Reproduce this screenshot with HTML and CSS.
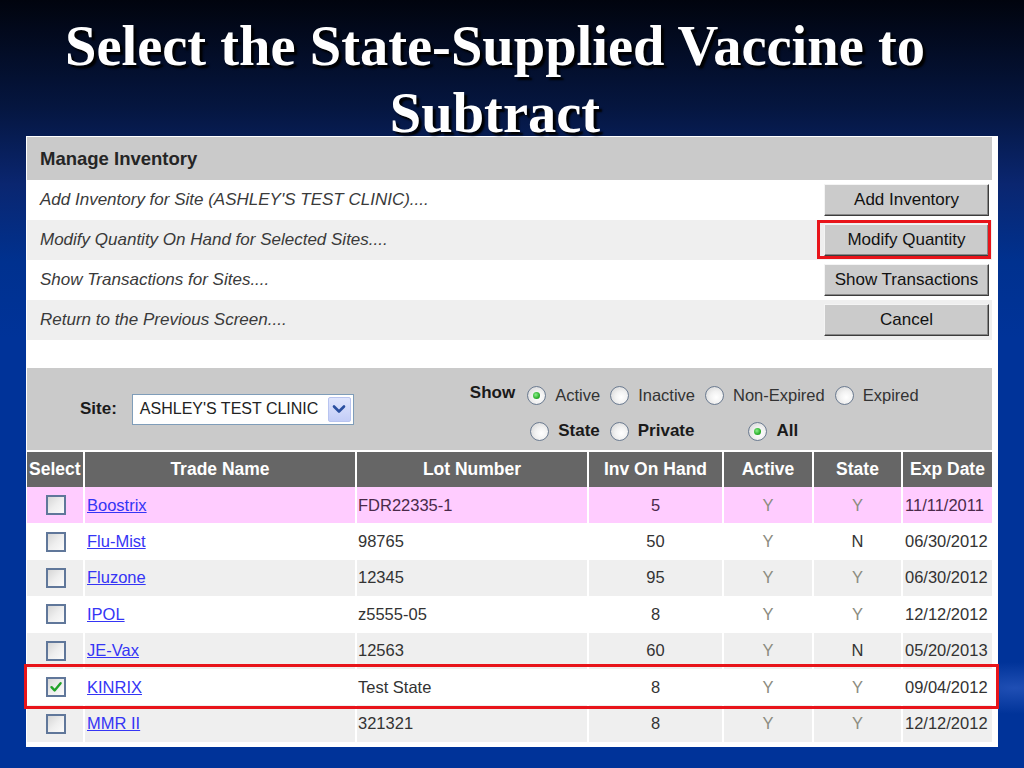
FILE: index.html
```html
<!DOCTYPE html>
<html lang="en">
<head>
<meta charset="utf-8">
<title>Select the State-Supplied Vaccine to Subtract</title>
<link rel="stylesheet" href="styles.css">
</head>
<body>
<div class="slide">
  <h1 class="title">Select the State-Supplied Vaccine to<br>Subtract</h1>

  <div class="panel">
    <div class="mi-head">Manage Inventory</div>
    <div class="mi-row">
      <span class="mi-text">Add Inventory for Site (ASHLEY'S TEST CLINIC)....</span>
      <button class="btn">Add Inventory</button>
    </div>
    <div class="mi-row alt">
      <span class="mi-text">Modify Quantity On Hand for Selected Sites....</span>
      <button class="btn hl">Modify Quantity</button>
    </div>
    <div class="mi-row">
      <span class="mi-text">Show Transactions for Sites....</span>
      <button class="btn">Show Transactions</button>
    </div>
    <div class="mi-row alt">
      <span class="mi-text">Return to the Previous Screen....</span>
      <button class="btn">Cancel</button>
    </div>

    <div class="filter">
      <div class="site">
        <span class="site-label">Site:</span>
        <div class="select">
          <span class="select-text">ASHLEY'S TEST CLINIC</span>
          <span class="select-btn">
            <svg width="14" height="10" viewBox="0 0 14 10"><path d="M2 2.5 L7 7.5 L12 2.5" fill="none" stroke="#2a4fa0" stroke-width="2.6" stroke-linecap="round" stroke-linejoin="round"/></svg>
          </span>
        </div>
      </div>
      <div class="show">
        <span class="show-label">Show</span>
        <div class="radios">
          <div class="radio-row">
            <span class="radio on"></span><span class="rlabel">Active</span>
            <span class="radio"></span><span class="rlabel">Inactive</span>
            <span class="radio"></span><span class="rlabel">Non-Expired</span>
            <span class="radio"></span><span class="rlabel">Expired</span>
          </div>
          <div class="radio-row bold">
            <span class="radio"></span><span class="rlabel">State</span>
            <span class="radio"></span><span class="rlabel">Private</span>
            <span class="radio on far"></span><span class="rlabel">All</span>
          </div>
        </div>
      </div>
    </div>

    <div class="grid">
      <div class="tr th">
        <div class="c sel">Select</div>
        <div class="c">Trade Name</div>
        <div class="c">Lot Number</div>
        <div class="c">Inv On Hand</div>
        <div class="c">Active</div>
        <div class="c">State</div>
        <div class="c">Exp Date</div>
      </div>
      <div class="tr pink">
        <div class="c sel"><span class="cb"></span></div>
        <div class="c name"><a href="#">Boostrix</a></div>
        <div class="c lot">FDR22335-1</div>
        <div class="c mid">5</div>
        <div class="c mid y">Y</div>
        <div class="c mid y">Y</div>
        <div class="c date">11/11/2011</div>
      </div>
      <div class="tr">
        <div class="c sel"><span class="cb"></span></div>
        <div class="c name"><a href="#">Flu-Mist</a></div>
        <div class="c lot">98765</div>
        <div class="c mid">50</div>
        <div class="c mid y">Y</div>
        <div class="c mid">N</div>
        <div class="c date">06/30/2012</div>
      </div>
      <div class="tr alt">
        <div class="c sel"><span class="cb"></span></div>
        <div class="c name"><a href="#">Fluzone</a></div>
        <div class="c lot">12345</div>
        <div class="c mid">95</div>
        <div class="c mid y">Y</div>
        <div class="c mid y">Y</div>
        <div class="c date">06/30/2012</div>
      </div>
      <div class="tr">
        <div class="c sel"><span class="cb"></span></div>
        <div class="c name"><a href="#">IPOL</a></div>
        <div class="c lot">z5555-05</div>
        <div class="c mid">8</div>
        <div class="c mid y">Y</div>
        <div class="c mid y">Y</div>
        <div class="c date">12/12/2012</div>
      </div>
      <div class="tr alt">
        <div class="c sel"><span class="cb"></span></div>
        <div class="c name"><a href="#">JE-Vax</a></div>
        <div class="c lot">12563</div>
        <div class="c mid">60</div>
        <div class="c mid y">Y</div>
        <div class="c mid">N</div>
        <div class="c date">05/20/2013</div>
      </div>
      <div class="tr picked">
        <div class="c sel"><span class="cb checked"><svg width="14" height="14" viewBox="0 0 14 14"><path d="M2.5 7.2 L5.6 10.4 L11.6 3.2" fill="none" stroke="#22a22a" stroke-width="2.4" stroke-linecap="round" stroke-linejoin="round"/></svg></span></div>
        <div class="c name"><a href="#">KINRIX</a></div>
        <div class="c lot">Test State</div>
        <div class="c mid">8</div>
        <div class="c mid y">Y</div>
        <div class="c mid y">Y</div>
        <div class="c date">09/04/2012</div>
      </div>
      <div class="tr alt">
        <div class="c sel"><span class="cb"></span></div>
        <div class="c name"><a href="#">MMR II</a></div>
        <div class="c lot">321321</div>
        <div class="c mid">8</div>
        <div class="c mid y">Y</div>
        <div class="c mid y">Y</div>
        <div class="c date">12/12/2012</div>
      </div>
    </div>
  </div>
</div>
</body>
</html>
```

FILE: styles.css
```css
html, body {
  margin: 0;
  padding: 0;
}

body {
  width: 1024px;
  height: 768px;
  overflow: hidden;
  font-family: "Liberation Sans", Arial, sans-serif;
}

.slide {
  width: 1024px;
  height: 768px;
  background:
    radial-gradient(ellipse 90px 26px at 1015px 688px, rgba(90, 130, 230, 0.35), rgba(90, 130, 230, 0) 100%),
    linear-gradient(180deg, #01040e 0%, #051640 14%, #0a2670 24%, #00318f 34%, #003399 44%, #003399 100%);
  overflow: hidden;
}

.title {
  margin: 0;
  height: 136px;
  box-sizing: border-box;
  padding: 13px 34px 0 0;
  font-family: "Liberation Serif", "Times New Roman", serif;
  font-weight: bold;
  font-size: 56.5px;
  line-height: 67px;
  color: #ffffff;
  text-align: center;
  text-shadow: 3px 3px 2px #000000;
  white-space: nowrap;
}

.panel {
  margin-left: 26px;
  width: 972px;
  box-sizing: border-box;
  background: #ffffff;
  padding: 1px 6px 5px 1px;
}

.mi-head {
  height: 43px;
  line-height: 43px;
  background: #cacaca;
  padding-left: 13px;
  font-weight: bold;
  font-size: 18.5px;
  color: #252525;
}

.mi-row {
  height: 40px;
  display: flex;
  align-items: center;
  justify-content: space-between;
  padding-left: 13px;
  background: #ffffff;
}

.mi-row.alt {
  background: #efefef;
}

.mi-text {
  font-style: italic;
  font-size: 17px;
  color: #3a3a3a;
}

.btn {
  position: relative;
  width: 165px;
  height: 32px;
  margin-right: 3px;
  padding: 0;
  font-family: "Liberation Sans", Arial, sans-serif;
  font-size: 17px;
  color: #111;
  background: #cbcbcb;
  border: 1px solid;
  border-color: #f4f4f4 #3c3c3c #3c3c3c #f4f4f4;
  box-shadow: inset -1px -1px 0 #888888;
}

.btn.hl::after {
  content: "";
  position: absolute;
  top: -5px;
  bottom: -4px;
  left: -8px;
  right: -3px;
  border: 3px solid #e8141a;
}

.filter {
  margin-top: 28px;
  height: 82px;
  background: #cacaca;
  display: flex;
  box-sizing: border-box;
  padding-top: 9px;
}

.site {
  display: flex;
  align-items: center;
  padding-left: 53px;
  height: 64px;
}

.site-label {
  font-weight: bold;
  font-size: 17px;
  color: #1a1a1a;
}

.select {
  margin-left: 15px;
  width: 222px;
  height: 31px;
  box-sizing: border-box;
  border: 1px solid #7f9db9;
  background: #ffffff;
  display: flex;
  align-items: center;
  justify-content: space-between;
  padding: 0 2px 0 7px;
}

.select-text {
  font-size: 16px;
  color: #222;
}

.select-btn {
  width: 23px;
  height: 25px;
  box-sizing: border-box;
  border: 1px solid #b8c4f0;
  border-radius: 2px;
  background: linear-gradient(180deg, #dfe5fd 0%, #c3cdf7 100%);
  display: flex;
  align-items: center;
  justify-content: center;
}

.show {
  display: flex;
  align-items: flex-start;
  margin-left: 116px;
}

.show-label {
  font-weight: bold;
  font-size: 17px;
  color: #1a1a1a;
  line-height: 32px;
  margin-right: 12px;
}

.radios {
  display: flex;
  flex-direction: column;
}

.radio-row {
  display: flex;
  align-items: center;
  height: 36px;
  font-size: 16.5px;
  color: #333;
}

.radio-row.bold {
  font-weight: bold;
  font-size: 17px;
  color: #1a1a1a;
  padding-left: 3px;
}

.radio {
  width: 19px;
  height: 19px;
  box-sizing: border-box;
  border-radius: 50%;
  border: 1px solid #6b7b91;
  background: radial-gradient(circle at 60% 60%, #ffffff 0%, #f2f2f2 40%, #cfcfcf 100%);
  margin-right: 9px;
  position: relative;
  flex: none;
}

.radio.on::after {
  content: "";
  position: absolute;
  left: 5px;
  top: 5px;
  width: 7px;
  height: 7px;
  border-radius: 50%;
  background: radial-gradient(circle at 40% 40%, #8cf08c 0%, #2cb02c 60%, #1a801a 100%);
}

.radio.far {
  margin-left: 44px;
}

.rlabel {
  margin-right: 10px;
}

.grid {
  margin-top: 2px;
}

.tr {
  display: grid;
  grid-template-columns: 56px 270px 230px 133px 88px 87px 1fr;
  column-gap: 2px;
  height: 36.4px;
  position: relative;
  font-size: 16.5px;
  color: #333;
}

.tr .c {
  display: flex;
  align-items: center;
  background: #ffffff;
  white-space: nowrap;
  overflow: hidden;
}

.tr.alt .c {
  background: #efefef;
}

.tr.pink .c {
  background: #ffccff;
  color: #4a2a4a;
}

.tr .c.y {
  color: #8c8c80;
}

.tr.th {
  height: 35px;
  font-weight: bold;
  font-size: 17.5px;
  color: #ffffff;
}

.tr.th .c {
  background: #666666;
  justify-content: center;
}

.tr.th .c.sel {
  justify-content: flex-start;
  padding-left: 2px;
}

.c.sel {
  justify-content: center;
}

.c.name {
  padding-left: 2px;
}

.c.name a {
  color: #3535f5;
  text-decoration: underline;
}

.c.lot {
  padding-left: 1px;
}

.c.mid {
  justify-content: center;
}

.c.date {
  padding-left: 2px;
}

.tr.picked::after {
  content: "";
  position: absolute;
  left: -3px;
  right: -7px;
  top: -5px;
  bottom: -4px;
  border: 3px solid #e8141a;
  pointer-events: none;
  z-index: 2;
}

.cb {
  width: 20px;
  height: 20px;
  box-sizing: border-box;
  border: 2px solid #60779a;
  background: linear-gradient(135deg, #d6d6d6 0%, #eeeeee 50%, #fbfbfb 100%);
  display: flex;
  align-items: center;
  justify-content: center;
  margin-left: 2px;
}
```
